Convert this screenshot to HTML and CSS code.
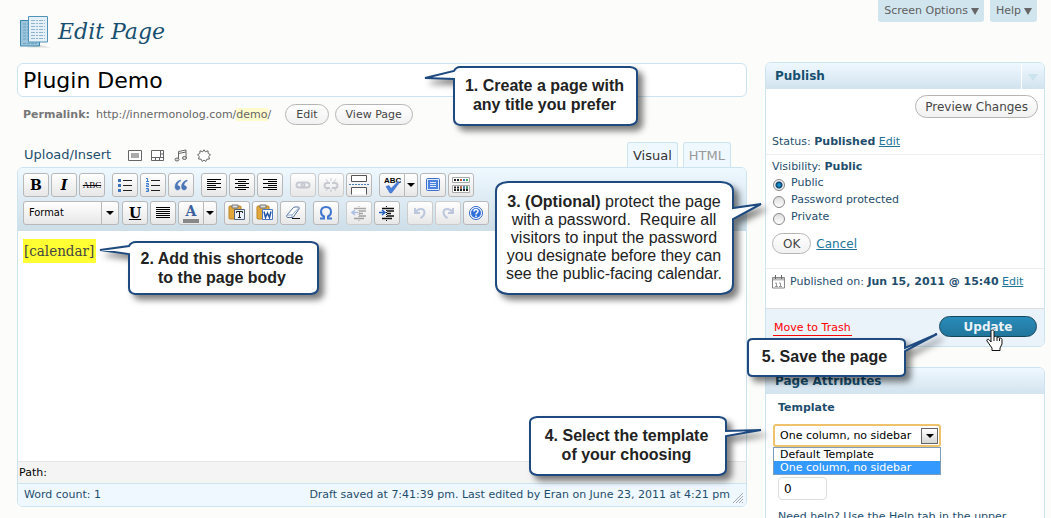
FILE: index.html
```html
<!DOCTYPE html>
<html lang="en">
<head>
<meta charset="utf-8">
<title>Edit Page</title>
<link rel="stylesheet" href="styles.css">
</head>
<body>
<div class="page">
  <header class="top">
    <svg class="page-icon" width="32" height="32" viewBox="0 0 32 32" aria-hidden="true">
      <path d="M6 31.500H31L20 29z" fill="#dcdcd8"/>
      <path d="M.500 4.500h19v25.500H.500z" fill="#9cc5dc" stroke="#3d87ab"/>
      <path d="M3 8h5M3 11h5M3 14h5M3 17h5M3 20h5M3 23h5M3 27.500h14" stroke="#6ba3c2" stroke-dasharray="3 1"/>
      <path d="M8.500 .500h19v25.500h-19z" fill="#e5f0f8" stroke="#4f94b7"/>
      <path d="M11 4.500h14M11 7.500h14M11 10.500h14M11 13.500h14M11 16.500h14M11 19.500h14M11 22.500h14" stroke="#8fb4cd" stroke-dasharray="4 1 2 1"/>
    </svg>
    <h1>Edit Page</h1>
    <nav class="meta">
      <a href="#options">Screen Options <span class="tri"></span></a>
      <a href="#help">Help <span class="tri"></span></a>
    </nav>
  </header>

  <div class="columns">
    <main>
      <input class="title" type="text" value="Plugin Demo" aria-label="Title">
      <div class="permalink">
        <strong>Permalink:</strong><span class="url">http://innermonolog.com/<mark>demo</mark>/</span>
        <button class="pill">Edit</button>
        <button class="pill">View Page</button>
      </div>
      <div class="media-row">
        <span class="upload">Upload/Insert</span>
        <a href="#image" aria-label="Add image"><svg width="14" height="12" viewBox="0 0 14 12"><path d="M.500 .500h13v10H.500z" fill="#fff" stroke="#666"/><path d="M3 3h8v5H3z" fill="#aaa"/></svg></a>
        <a href="#video" aria-label="Add video"><svg width="14" height="12" viewBox="0 0 14 12"><path d="M.500 .500h12v10H.500zM.500 7.500h12M9.500 .500v7M4.500 7.500v3M8.500 7.500v3M9.500 4h3" fill="#fff" stroke="#666"/></svg></a>
        <a href="#audio" aria-label="Add audio"><svg width="14" height="13" viewBox="0 0 14 13"><path d="M4.500 10V2.500L12 1v8M4.500 4.500L12 3" fill="none" stroke="#666"/><ellipse cx="3" cy="10.500" rx="2" ry="1.500" fill="#ddd" stroke="#666"/><ellipse cx="10.500" cy="9" rx="2" ry="1.500" fill="#ddd" stroke="#666"/></svg></a>
        <a href="#media" aria-label="Add media"><svg width="14" height="13" viewBox="0 0 14 13"><path d="M7 .800l1.300 2 2.700-1 .200 2.700 2.300 1.300-1.800 1.700 .800 2.500-2.700.200-1 2.300L7 11l-1.800 1.500-1-2.300-2.700-.200.800-2.500L.500 5.800l2.300-1.300L3 1.800l2.700 1z" fill="#fff" stroke="#666"/></svg></a>
        <div class="tabs" role="tablist">
          <button class="tab active" role="tab">Visual</button>
          <button class="tab" role="tab">HTML</button>
        </div>
      </div>

      <section class="editor">
        <div class="toolbar">
          <div class="row">
            <div class="group">
              <button class="tool glyph" aria-label="Bold"><b>B</b></button>
              <button class="tool glyph" aria-label="Italic"><i>I</i></button>
              <button class="tool glyph small" aria-label="Strikethrough"><s>ABC</s></button>
            </div>
            <div class="group">
              <button class="tool" aria-label="Bulleted list"><svg width="16" height="16" viewBox="0 0 16 16"><path d="M6 3.500h9M6 8.500h9M6 13.500h9" stroke="#222"/><path d="M1 2h3v3H1zM1 7h3v3H1zM1 12h3v3H1z" fill="#3b6fb6"/></svg></button>
              <button class="tool" aria-label="Numbered list"><svg width="16" height="16" viewBox="0 0 16 16"><path d="M6 3.500h9M6 8.500h9M6 13.500h9" stroke="#222"/><path d="M1 1.500h1.500v3M1 4.500h3M1 6.500h2.500v1.500H1.500v1.500H4M1 11.500h2.500v3H1M1.500 13h2" fill="none" stroke="#3b7bd0"/></svg></button>
              <button class="tool" aria-label="Blockquote"><svg width="16" height="16" viewBox="0 0 16 16"><path d="M7.500 3C4 4 2 6.500 2 9.800c0 2 1 3.200 2.600 3.200C6 13 7 12 7 10.700S6 8.500 4.500 8.500C4.300 6.500 5.500 5 7.800 4zM14 3c-3.500 1-5.500 3.500-5.500 6.800 0 2 1 3.200 2.600 3.200 1.400 0 2.400-1 2.400-2.300S12.500 8.500 11 8.500c-.200-2 1-3.500 3.300-4.500z" fill="#4b76b8" stroke="#4b76b8" stroke-width=".500"/></svg></button>
            </div>
            <div class="group">
              <button class="tool" aria-label="Align left"><svg width="16" height="16" viewBox="0 0 16 16"><path d="M1 2.500h14M1 4.500h9M1 6.500h14M1 8.500h9M1 10.500h14M1 12.500h9" stroke="#000"/></svg></button>
              <button class="tool" aria-label="Align center"><svg width="16" height="16" viewBox="0 0 16 16"><path d="M1 2.500h14M4 4.500h8M1 6.500h14M4 8.500h8M1 10.500h14M4 12.500h8" stroke="#000"/></svg></button>
              <button class="tool" aria-label="Align right"><svg width="16" height="16" viewBox="0 0 16 16"><path d="M1 2.500h14M6 4.500h9M1 6.500h14M6 8.500h9M1 10.500h14M6 12.500h9" stroke="#000"/></svg></button>
            </div>
            <div class="group">
              <button class="tool" disabled aria-label="Link"><svg width="16" height="16" viewBox="0 0 16 16"><rect x="1.500" y="5.500" width="8" height="5" rx="2.500" fill="none" stroke="#777d92" stroke-width="2"/><rect x="6.500" y="5.500" width="8" height="5" rx="2.500" fill="none" stroke="#777d92" stroke-width="2"/></svg></button>
              <button class="tool" disabled aria-label="Unlink"><svg width="16" height="16" viewBox="0 0 16 16"><path d="M8 1v3M3 2l2 3M13 2l-2 3M8 12v3M3 14l2-3M13 14l-2-3" stroke="#777d92"/><path d="M7 6H4a2 2 0 0 0 0 5h3M9 6h3a2 2 0 0 1 0 5H9" fill="none" stroke="#777d92" stroke-width="2"/></svg></button>
              <button class="tool" aria-label="Insert More tag"><svg width="20" height="20" viewBox="0 0 20 20"><path d="M2.500 .500h15v6h-15zM2.500 19.500v-7h15v7" fill="#fff" stroke="#555"/><path d="M0 9.500h20" stroke="#4b7fb5" stroke-dasharray="2 1"/></svg></button>
            </div>
            <div class="group">
              <div class="split">
                <button class="tool" aria-label="Check spelling"><svg width="18" height="18" viewBox="0 0 18 18"><text x="1" y="7" class="abc">ABC</text><path d="M3 10.500l3-1 2 3 7-7 1.500 1L8.500 17H7z" fill="#4a7fdc" stroke="#2c5db5" stroke-width=".500"/></svg></button>
                <button class="arrow" aria-label="Spelling languages"><span class="caret"></span></button>
              </div>
              <button class="tool" aria-label="Full screen"><svg width="16" height="16" viewBox="0 0 16 16"><rect x="1.500" y="1.500" width="13" height="12" rx="1" fill="#dce9ff" stroke="#3f70c9"/><rect x="3" y="3" width="10" height="9" fill="#4b82df"/><path d="M5 5.500h6M5 7.500h6M5 9.500h6" stroke="#dbe8ff"/></svg></button>
              <button class="tool" aria-label="Kitchen sink"><svg width="18" height="16" viewBox="0 0 18 16"><path d="M.500 .500h17v5H.500zM.500 8.500h17v7H.500z" fill="#fff" stroke="#aaa"/><path d="M2 3h14M2 10.500h14M2 13h14" stroke="#222" stroke-width="2" stroke-dasharray="2 1"/><path d="M8 2h2v2H8zM8 9.500h2v2H8z" fill="#c05a2b"/><path d="M14 2h2v2h-2zM14 9.500h2v2h-2z" fill="#3fa36c"/><path d="M11 2h2v2h-2zM11 9.500h2v2h-2z" fill="#3b78c4"/></svg></button>
            </div>
          </div>
          <div class="row">
            <div class="group">
              <div class="split format">
                <button class="format-name">Format</button>
                <button class="arrow wide" aria-label="Choose format"><span class="caret"></span></button>
              </div>
              <button class="tool glyph" aria-label="Underline"><u>U</u></button>
              <button class="tool" aria-label="Justify"><svg width="16" height="16" viewBox="0 0 16 16"><path d="M1 2.500h14M1 4.500h14M1 6.500h14M1 8.500h14M1 10.500h14M1 12.500h14" stroke="#000"/></svg></button>
              <div class="split">
                <button class="tool glyph" aria-label="Text color"><span class="swatch">A</span></button>
                <button class="arrow" aria-label="Choose color"><span class="caret"></span></button>
              </div>
            </div>
            <div class="group">
              <button class="tool" aria-label="Paste as text"><svg width="18" height="18" viewBox="0 0 18 18"><rect x="1" y="2" width="12" height="13" rx="1" fill="#e2a93a" stroke="#b98524"/><path d="M4 1h6v3H4z" fill="#ddd" stroke="#777"/><path d="M6.500 5.500h10v10h-10z" fill="#eaf1fa" stroke="#50617c"/><path d="M8.500 9V7.500h6V9M11.500 8v5.500M10 13.500h3" fill="none" stroke="#222"/></svg></button>
              <button class="tool" aria-label="Paste from Word"><svg width="18" height="18" viewBox="0 0 18 18"><rect x="1" y="2" width="12" height="13" rx="1" fill="#e2a93a" stroke="#b98524"/><path d="M4 1h6v3H4z" fill="#ddd" stroke="#777"/><path d="M6.500 5.500h10v10h-10z" fill="#fff" stroke="#4a78c0"/><path d="M8 7.500l1.500 6 2-4.500 2 4.500 1.500-6" fill="none" stroke="#2454a8" stroke-width="1.500"/></svg></button>
              <button class="tool" aria-label="Remove formatting"><svg width="16" height="16" viewBox="0 0 16 16"><path d="M2 10L8 3c.5-.5 1-1 2-1h3c1.500 0 1.500 1 1 2L8 12.500H3c-1.500 0-1.500-1-1-2.500z" fill="#fff" stroke="#57759a"/><path d="M2 10h5l6.500-7M7 10v2" fill="none" stroke="#8da9cb"/><path d="M7 13.500h8" stroke="#111"/></svg></button>
            </div>
            <div class="group">
              <button class="tool" aria-label="Special character"><svg width="16" height="16" viewBox="0 0 16 16"><path d="M2 13.500h4v-2C4 10.500 3 9 3 7c0-3 2-5 5-5s5 2 5 5c0 2-1 3.500-3 4.500v2h4" fill="none" stroke="#4177cf" stroke-width="2"/></svg></button>
            </div>
            <div class="group">
              <button class="tool" disabled aria-label="Outdent"><svg width="16" height="16" viewBox="0 0 16 16"><path d="M8 1v15" stroke="#111" stroke-dasharray="1 1"/><path d="M3 3.500h12M8 6h7M8 8.500h4M8 11h7M3 13.500h10" stroke="#111" stroke-width="1.500"/><path d="M7 7.500H1M4 5L1 7.500 4 10" fill="none" stroke="#2560c0" stroke-width="1.500"/></svg></button>
              <button class="tool" aria-label="Indent"><svg width="16" height="16" viewBox="0 0 16 16"><path d="M7.500 1v15" stroke="#111" stroke-dasharray="1 1"/><path d="M3 3.500h12M8 6h7M8 8.500h4M8 11h7M3 13.500h10" stroke="#111" stroke-width="1.500"/><path d="M0 7.500h5M3 5l3 2.500L3 10" fill="none" stroke="#2560c0" stroke-width="1.500"/></svg></button>
            </div>
            <div class="group">
              <button class="tool" disabled aria-label="Undo"><svg width="16" height="16" viewBox="0 0 16 16"><path d="M3 3v5h5M3.500 7.500C6 3 12 3 12.500 7c0 3-2 5-4 6" fill="none" stroke="#5676b5" stroke-width="2"/></svg></button>
              <button class="tool" disabled aria-label="Redo"><svg width="16" height="16" viewBox="0 0 16 16"><path d="M13 3v5H8M12.500 7.500C10 3 4 3 3.500 7c0 3 2 5 4 6" fill="none" stroke="#5676b5" stroke-width="2"/></svg></button>
              <button class="tool" aria-label="Help"><svg width="16" height="16" viewBox="0 0 16 16"><circle cx="8" cy="8" r="6.500" fill="#fff" stroke="#2a63c6"/><circle cx="8" cy="8" r="5" fill="#2f6fda"/><path d="M6 6.500C6 4 10 4 10 6.300 10 7.800 8 7.700 8 9.500M8 10.500v1.500" fill="none" stroke="#fff" stroke-width="1.500"/></svg></button>
            </div>
          </div>
        </div>
        <div class="content" contenteditable="true" role="textbox" aria-label="Page body"><mark>[calendar]</mark></div>
        <div class="path">Path:</div>
        <div class="status">
          <span>Word count: 1</span>
          <span class="saved">Draft saved at 7:41:39 pm. Last edited by Eran on June 23, 2011 at 4:21 pm</span>
          <svg width="12" height="12" viewBox="0 0 12 12" aria-hidden="true"><path d="M1 11L11 1M4 11l7-7M7 11l4-4M10 11l1-1" stroke="#aaa"/></svg>
        </div>
      </section>
    </main>

    <aside>
      <section class="box">
        <h2>Publish<button class="toggle" aria-label="Toggle panel"><span class="tri pale"></span></button></h2>
        <div class="preview"><button class="pill large">Preview Changes</button></div>
        <p class="line">Status: <b>Published</b> <a href="#status">Edit</a></p>
        <div class="visibility">
          <p>Visibility: <b>Public</b></p>
          <label><input type="radio" name="visibility" checked>Public</label>
          <label><input type="radio" name="visibility">Password protected</label>
          <label><input type="radio" name="visibility">Private</label>
          <div class="confirm"><button class="pill">OK</button><a href="#cancel">Cancel</a></div>
        </div>
        <div class="date">
          <svg width="14" height="14" viewBox="0 0 14 14" aria-hidden="true"><path d="M.500 2.500h12v10.500H.500z" fill="#fff" stroke="#888"/><path d="M1 3h11v2.500H1z" fill="#bbb"/><path d="M3.500 0v4M9.500 0v4" stroke="#666"/><path d="M3 8h1.500v4M3 11.500h3M7 8h1.500v4M7 11.500h3" fill="none" stroke="#999"/></svg>
          <span>Published on: <b>Jun 15, 2011 @ 15:40</b> <a href="#date">Edit</a></span>
        </div>
        <div class="actions">
          <a class="trash" href="#trash">Move to Trash</a>
          <button class="update">Update<svg class="pointer" width="17" height="22" viewBox="0 0 17 22" aria-hidden="true"><path d="M5 13V2.500C5 .500 8 .500 8 2.500V8c.500-1 2.500-1 3 .500.500-.800 2.300-.500 2.500.800.800-.600 2.500 0 2.500 1.200V15l-2 4v2.500H6V19L1 12c-.800-1.500 1-2.500 2.200-1.200z" fill="#fff" stroke="#111"/><path d="M8 8v4M11 8.500V12M13.500 9.500V12" stroke="#111"/></svg></button>
        </div>
      </section>

      <section class="box attributes">
        <h2>Page Attributes</h2>
        <div class="inside">
          <label class="caption" for="template">Template</label>
          <div class="picker">
            <select id="template"><option>Default Template</option><option selected>One column, no sidebar</option></select>
            <span class="drop"><span class="caret"></span></span>
            <ul class="options" role="listbox" aria-label="Templates">
              <li role="option">Default Template</li>
              <li role="option" class="chosen" aria-selected="true">One column, no sidebar</li>
            </ul>
          </div>
          <input class="order" type="text" value="0" aria-label="Order">
          <p class="hint">Need help? Use the Help tab in the upper</p>
        </div>
      </section>
    </aside>
  </div>

  <div class="callout one"><svg width="214" height="60" viewBox="0 0 214 60" aria-hidden="true"><path d="M36 1H206Q213 2 213 6V53Q213 58 206 59H36Q30 58 30 53V13L1 12 30 5Q32 1 36 1z"/></svg><p>1. Create a page with<br>any title you prefer</p></div>
  <div class="callout two"><svg width="220" height="54" viewBox="0 0 220 54" aria-hidden="true"><path d="M37 1H212Q219 2 219 6V47Q219 52 212 53H36Q30 52 30 47V13L1 9 30 5Q32 1 37 1z"/></svg><p>2. Add this shortcode<br>to the page body</p></div>
  <div class="callout three"><svg width="268" height="114" viewBox="0 0 268 114" aria-hidden="true"><path d="M13 1H226Q238 2 238 10V27L266 23 238 38V103Q238 112 226 113H13Q1 112 1 103V10Q1 2 13 1z"/></svg><p><b>3. (Optional)</b> protect the page<br>with a password.&nbsp; Require all<br>visitors to input the password<br>you designate before they can<br>see the public-facing calendar.</p></div>
  <div class="callout four"><svg width="234" height="60" viewBox="0 0 234 60" aria-hidden="true"><path d="M8 1H190Q197 2 197 6V15L232 14 197 20V53Q197 58 190 59H8Q1 58 1 53V6Q1 2 8 1z"/></svg><p>4. Select the template<br>of your choosing</p></div>
  <div class="callout five"><svg width="192" height="44" viewBox="0 0 192 44" aria-hidden="true"><path d="M6 6H152Q158 6 158 10V15L190 1 158 18V39Q158 43 152 43H6Q1 43 1 39V10Q1 6 6 6z"/></svg><p>5. Save the page</p></div>
</div>
</body>
</html>
```
FILE: styles.css
```css
* { box-sizing: border-box; }
body {
  margin: 0;
  background: #fcfcfa;
  color: #1f4e6d;
  font: 11px/14px "DejaVu Sans", Verdana, sans-serif;
}
button, input, select { font: inherit; }
button { cursor: pointer; }
h1, h2, p, ul { margin: 0; padding: 0; }
svg { display: block; }
a { color: #21759b; }

.page { position: relative; height: 100vh; overflow: hidden; padding: 0 6px 0 17px; }
.top { display: flex; height: 62px; padding-left: 3px; align-items: flex-start; }
.page-icon { margin-top: 16px; }
.top h1 {
  flex: 1;
  margin: 16px 0 0 6px;
  color: #174f70;
  font: italic 22px/32px "DejaVu Serif", Georgia, serif;
}
.meta { display: flex; gap: 6px; padding-right: 8px; }
.meta a {
  display: flex;
  align-items: center;
  gap: 3px;
  height: 22px;
  padding: 0 5px 0 6px;
  border-radius: 0 0 3px 3px;
  background: #d1e5ee;
  color: #606060;
  text-decoration: none;
}
.tri { border: 4px solid transparent; border-top: 7px solid #666; border-bottom: 0; }
.tri.pale { border-top-color: #cbe3ed; border-left-width: 5px; border-right-width: 5px; }

.columns { display: flex; gap: 18px; align-items: flex-start; }
main { flex: 1; min-width: 0; padding-top: 1px; }
aside { width: 280px; }

.title {
  display: block;
  width: 100%;
  height: 34px;
  padding: 0 5px;
  border: 1px solid #cbe4ef;
  border-radius: 6px;
  background: #fff;
  color: #000;
  font-size: 22px;
}
.permalink { display: flex; align-items: center; gap: 6px; padding: 7px 0 0 6px; color: #666; }
.permalink strong { color: #777; }
.url { padding-right: 8px; }
mark { background: #fffbcc; color: inherit; }
.pill {
  height: 21px;
  padding: 0 10px;
  border: 1px solid #b5b5b5;
  border-radius: 11px;
  background: linear-gradient(#fff, #f1f1f1);
  color: #464646;
}
.pill.large { height: 23px; padding: 0 9px; font-size: 12px; border-radius: 12px; }

.media-row { display: flex; align-items: center; height: 42px; padding: 17px 16px 0 7px; gap: 9px; }
.media-row a { padding-top: 2px; }
.upload { margin-right: 8px; font-size: 13px; }
.tabs { display: flex; gap: 5px; margin-left: auto; font-size: 13px; }
.tab {
  height: 25px;
  padding: 2px 5px 0;
  border: 1px solid #cbe4ef;
  border-bottom: 0;
  border-radius: 3px 3px 0 0;
  background: #eff8ff;
  color: #999;
}
.tab.active { color: #333; }

.editor { border: 1px solid #cbe4ef; border-radius: 6px; overflow: hidden; background: #fff; }
.toolbar {
  display: grid;
  gap: 4px;
  padding: 5px 5px 6px;
  background: linear-gradient(#eff8ff, #cddee8);
}
.row { display: flex; gap: 7px; }
.group { display: flex; gap: 2px; }
.tool, .arrow, .format-name {
  display: flex;
  align-items: center;
  justify-content: center;
  width: 26px;
  height: 24px;
  padding: 0;
  border: 1px solid #b8b8b8;
  border-radius: 3px;
  background: linear-gradient(#fff, #e7e7e7);
  color: #000;
}
.tool:disabled { border-color: #ccc; }
.tool:disabled svg { opacity: .35; }
.glyph { font: bold 14px/20px "DejaVu Serif", serif; }
.small { font: 9px/20px "Liberation Serif", serif; }
.abc { font: bold 8px "Liberation Sans", sans-serif; }
.swatch { width: 16px; border-bottom: 4px solid #888; color: #3c619f; line-height: 15px; }
.split { display: flex; }
.split .tool, .format-name { border-radius: 3px 0 0 3px; }
.split .arrow { width: 13px; border-left: 0; border-radius: 0 3px 3px 0; }
.split .wide { width: 17px; }
.format { margin-right: 1px; }
.format-name { width: 79px; padding-left: 5px; justify-content: flex-start; font-family: "DejaVu Sans Condensed", "DejaVu Sans", sans-serif; }
.caret { border: 4px solid transparent; border-top-color: #000; border-bottom: 0; }

.content { height: 230px; padding: 8px 5px; color: #444; font: 15px/24px "DejaVu Serif Condensed", "DejaVu Serif", serif; }
.content mark { display: inline-block; padding: 0 2px 0 1px; background: #ff3; }
.path { height: 22px; padding: 4px 1px; border-top: 1px solid #e5e5e5; background: #f4f4f4; color: #000; }
.status {
  display: flex;
  align-items: flex-end;
  height: 23px;
  padding: 0 2px 2px 6px;
  border-top: 1px solid #cbe4ef;
  background: #eff8ff;
}
.status span { line-height: 19px; }
.saved { margin-left: auto; padding-right: 2px; }

.box { border: 1px solid #cbe4ef; border-radius: 6px; background: #fff; }
.box h2 {
  display: flex;
  justify-content: space-between;
  height: 26px;
  padding-left: 9px;
  border-radius: 5px 5px 0 0;
  background: linear-gradient(#eff8ff, #d2e3ee);
  color: #174f70;
  font: bold 12px/27px "DejaVu Sans", Verdana, sans-serif;
}
.toggle {
  display: flex;
  align-items: center;
  justify-content: center;
  width: 23px;
  height: 26px;
  padding: 2px 0 0;
  border: 0;
  border-left: 1px solid #fff;
  background: none;
}
.preview { display: flex; justify-content: flex-end; padding: 6px 6px 12px; }
.line { padding: 5px 6px; border-bottom: 1px solid #eee; }
.visibility { padding: 5px 6px 14px; border-bottom: 1px solid #eee; }
.visibility label { display: flex; align-items: center; height: 17px; gap: 6px; }
.visibility input {
  appearance: none;
  width: 12px;
  height: 12px;
  margin: 4px 0 0 1px;
  border: 1px solid #888;
  border-radius: 50%;
  background: linear-gradient(#ddd, #fff);
}
.visibility input:checked { background: radial-gradient(circle, #1592ce 1px, #10406a 3px, #eee 4px); }
.confirm { display: flex; align-items: center; gap: 5px; padding-top: 8px; font-size: 12px; }
.date { display: flex; gap: 4px; padding: 6px 6px 19px; }
.actions {
  display: flex;
  justify-content: space-between;
  align-items: flex-start;
  padding: 7px 7px 9px;
  border-top: 1px solid #ddd;
  border-radius: 0 0 5px 5px;
  background: #eaf2fa;
}
.trash { margin-top: 5px; padding: 0 1px; border-bottom: 1px solid #f00; color: #f00; text-decoration: none; }
.update {
  position: relative;
  width: 98px;
  height: 21px;
  border: 1px solid #13455b;
  border-radius: 11px;
  background: linear-gradient(#298cba, #21759b);
  color: #eaf2fa;
  font-size: 12px;
  font-weight: bold;
}
.pointer { position: absolute; left: 46px; top: 12px; }

.attributes { margin-top: 20px; }
.inside { padding: 7px 7px 12px; }
.caption { display: block; padding-left: 5px; font-weight: bold; }
.picker { position: relative; width: 168px; margin-top: 9px; }
.picker select {
  appearance: none;
  display: block;
  width: 168px;
  height: 23px;
  padding: 0 5px;
  border: 2px solid #efc26c;
  border-radius: 3px;
  outline: 0;
  background: #fff;
  color: #000;
}
.drop {
  position: absolute;
  top: 4px;
  right: 3px;
  display: grid;
  place-items: center;
  width: 17px;
  height: 16px;
  border: 1px solid #666;
  background: linear-gradient(#fff, #d6d6d6);
  pointer-events: none;
}
.options {
  position: absolute;
  top: 23px;
  left: 0;
  right: 0;
  border: 1px solid #7f9db9;
  background: #fff;
  color: #000;
  line-height: 13px;
  list-style: none;
}
.options li { padding: 0 6px; }
.options .chosen { background: #39f; color: #fff; }
.order {
  display: block;
  width: 49px;
  height: 23px;
  margin: 30px 0 10px 5px;
  padding: 0 5px;
  border: 1px solid #ddd;
  border-radius: 4px;
  color: #000;
  font-size: 12px;
}
.hint { padding-left: 5px; }

.callout { position: absolute; color: #222; font: bold 16px/19px "Liberation Sans", Arial, sans-serif; text-align: center; white-space: nowrap; }
.callout svg { filter: drop-shadow(5px 5px 3px rgba(0, 0, 0, .5)); overflow: visible; }
.callout path { fill: #fff; stroke: #1f4a80; stroke-width: 2; }
.callout p { position: absolute; inset: 0; }
.one { left: 424px; top: 66px; }
.one p { padding: 10px 0 0 27px; }
.two { left: 99px; top: 241px; }
.two p { padding: 8px 0 0 26px; }
.three { right: 288px; top: 181px; font-weight: normal; line-height: 18px; }
.three p { padding: 12px 30px 0 0; }
.four { right: 288px; top: 416px; }
.four p { padding: 10px 39px 0 0; }
.five { right: 112px; top: 333px; }
.five p { padding: 14px 37px 0 0; }
```
